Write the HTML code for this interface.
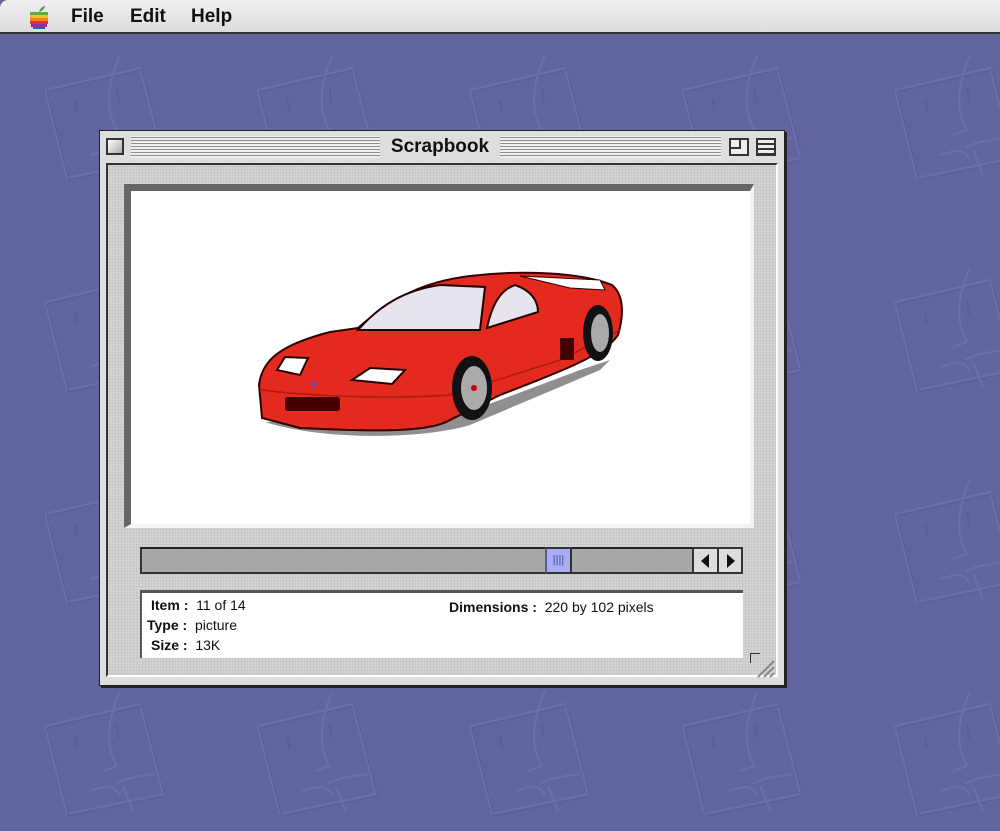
<!DOCTYPE html>
<html><head><meta charset="utf-8"><style>
*{margin:0;padding:0;box-sizing:border-box}
body{width:1000px;height:831px;overflow:hidden;background:#6264a0;font-family:"Liberation Sans",sans-serif;position:relative}
.menubar{position:absolute;left:0;top:0;width:1000px;height:34px;background:linear-gradient(#f0f0f0,#dcdcdc);border-bottom:2px solid #333;border-top-left-radius:8px}
.menubar span{position:absolute;top:6px;font-weight:bold;font-size:19px;color:#111}
.abs{position:absolute}
.win{left:99px;top:130px;width:686px;height:556px;background:#dedede;border:1px solid #222;box-shadow:2px 2px 0 #222}
.dots{background-color:#d4d4d4;background-image:radial-gradient(#c2c2c2 0.8px,transparent 1px);background-size:3px 3px}
.info{font-size:14px;color:#111}
.info b{font-weight:bold}
</style></head><body>
<svg class="abs" style="left:0;top:0" width="1000" height="831">
<defs><pattern id="p" x="45" y="50" width="212.5" height="212" patternUnits="userSpaceOnUse">
<g fill="none" stroke-width="2">
<polygon points="0,40 95,18 118,108 22,128" stroke="#6c6eaa"/>
<polygon points="2,42 97,20 120,110 24,130" stroke="#5a5c96" stroke-width="1"/>
<path d="M75,5 C62,35 60,60 72,80 L58,85 M70,98 C80,92 95,90 110,88 M45,105 C60,100 70,98 75,110 M78,100 L88,125" stroke="#6c6eaa"/>
<path d="M30,50 L32,62 M72,38 L74,52" stroke="#5a5c96"/>
</g></pattern></defs>
<rect x="0" y="34" width="1000" height="797" fill="url(#p)"/>
</svg>
<div class="menubar">
<svg class="abs" style="left:28px;top:5px" width="22" height="24" viewBox="0 0 22 24">
<path d="M11,7 C13,2 16,1 17,1 C16,4 14,6 11,7Z" fill="#3a9a2a"/>
<rect x="2" y="7" width="18" height="3" fill="#5db040"/><rect x="2" y="10" width="18" height="3" fill="#f5c020"/><rect x="2" y="13" width="18" height="3" fill="#f08020"/><rect x="2" y="16" width="18" height="3" fill="#e03030"/><rect x="3" y="19" width="16" height="3" fill="#903090"/><rect x="5" y="22" width="12" height="2" fill="#2060c0"/>
</svg>
<span style="left:71px">File</span><span style="left:130px">Edit</span><span style="left:191px">Help</span>
</div>
<div class="abs win"></div>
<div class="abs" style="left:131px;top:136px;width:590px;height:22px;background:repeating-linear-gradient(#eeeeee 0 1px,#8f8f8f 1px 2px,#eeeeee 2px 3px);"></div>
<div class="abs" style="left:106px;top:138px;width:18px;height:17px;border:2px solid #333;background:linear-gradient(135deg,#fff,#aaa)"></div>
<div class="abs" style="left:380px;top:134px;width:120px;height:26px;background:#dedede;text-align:center;font-weight:bold;font-size:19px;line-height:26px;color:#111">Scrapbook</div>
<div class="abs" style="left:729px;top:138px;width:20px;height:18px;border:2px solid #333;background:#eee"><div class="abs" style="left:0;top:0;width:10px;height:9px;border-right:2px solid #333;border-bottom:2px solid #333"></div></div>
<div class="abs" style="left:756px;top:138px;width:20px;height:18px;border:2px solid #333;background:repeating-linear-gradient(#eee 0 3px,#333 3px 5px)"></div>
<div class="abs dots" style="left:106px;top:163px;width:672px;height:514px;border:2px solid #333;border-right-color:#fff;border-bottom-color:#fff"></div>
<div class="abs" style="left:124px;top:184px;width:630px;height:344px;background:#fff;border-left:7px solid #666;border-top:7px solid #666;border-right:4px solid #f4f4f4;border-bottom:4px solid #f4f4f4"></div>
<svg class="abs" style="left:0;top:0" width="1000" height="831">
<path d="M265,422 C320,440 420,440 470,425 L600,370 L610,360 L580,370 L460,415 Z" fill="#444" opacity=".6"/>
<path d="M262,418 L259,385 C262,360 280,345 330,332 L358,328 C390,300 420,282 470,276 C520,270 580,272 612,285 C624,295 624,315 618,335 C605,355 560,372 500,395 L450,420 C430,432 380,432 300,428 Z" fill="#e42a1e" stroke="#300" stroke-width="2"/>
<path d="M358,330 C380,305 405,290 440,285 L485,287 L480,330 Z" fill="#e8e4ee" stroke="#200" stroke-width="2"/>
<path d="M487,328 C492,305 500,290 515,285 C530,290 538,300 538,312 Z" fill="#e8e4ee" stroke="#200" stroke-width="2"/>
<path d="M520,276 L600,280 L605,290 L570,288 Z" fill="#fff" stroke="#300"/>
<path d="M262,390 C300,395 380,400 450,395 L560,360 L620,330" fill="none" stroke="#b01810" stroke-width="1.5"/>
<path d="M277,370 L285,357 L308,358 L300,375 Z" fill="#fff" stroke="#200" stroke-width="2"/>
<path d="M352,380 L370,368 L405,370 L392,384 Z" fill="#fff" stroke="#200" stroke-width="2"/>
<rect x="285" y="397" width="55" height="14" rx="3" fill="#400"/>
<rect x="560" y="338" width="14" height="22" fill="#400"/>
<ellipse cx="472" cy="388" rx="20" ry="32" fill="#111"/><ellipse cx="474" cy="388" rx="13" ry="22" fill="#aaa"/><circle cx="474" cy="388" r="3" fill="#c00"/>
<ellipse cx="598" cy="333" rx="15" ry="28" fill="#111"/><ellipse cx="600" cy="333" rx="9" ry="19" fill="#aaa"/>
<circle cx="314" cy="384" r="3" fill="#8040a0"/>
</svg>
<div class="abs" style="left:140px;top:547px;width:603px;height:27px;background:#a8a8a8;border:2px solid #333;border-top-color:#222"></div>
<div class="abs" style="left:545px;top:547px;width:27px;height:27px;background:#a8acf0;border:2px solid #333;border-left-color:#5558a8;font-size:11px;text-align:center;line-height:22px;color:#44a">||||</div>
<div class="abs" style="left:692px;top:547px;width:51px;height:27px;background:#ddd;border:2px solid #333"><div class="abs" style="left:23px;top:0;width:2px;height:23px;background:#333"></div>
<div class="abs" style="left:7px;top:5px;border-right:8px solid #111;border-top:7px solid transparent;border-bottom:7px solid transparent"></div>
<div class="abs" style="left:33px;top:5px;border-left:8px solid #111;border-top:7px solid transparent;border-bottom:7px solid transparent"></div></div>
<div class="abs info" style="left:140px;top:590px;width:603px;height:68px;background:#fff;border-left:2px solid #555;border-top:3px solid #555">
<div class="abs" style="left:9px;top:4px"><b>Item</b> <b>:</b>&nbsp; 11 of 14</div>
<div class="abs" style="left:5px;top:24px"><b>Type</b> <b>:</b>&nbsp; picture</div>
<div class="abs" style="left:9px;top:44px"><b>Size</b> <b>:</b>&nbsp; 13K</div>
<div class="abs" style="left:307px;top:6px"><b>Dimensions</b> <b>:</b>&nbsp; 220 by 102 pixels</div>
</div>
<svg class="abs" style="left:750px;top:653px" width="28" height="28"><path d="M8,24 L24,8 M14,24 L24,14 M20,24 L24,20" stroke="#888" stroke-width="2"/><path d="M0,0 L0,10 M0,0 L10,0" stroke="#333" stroke-width="2"/></svg>
</body></html>
